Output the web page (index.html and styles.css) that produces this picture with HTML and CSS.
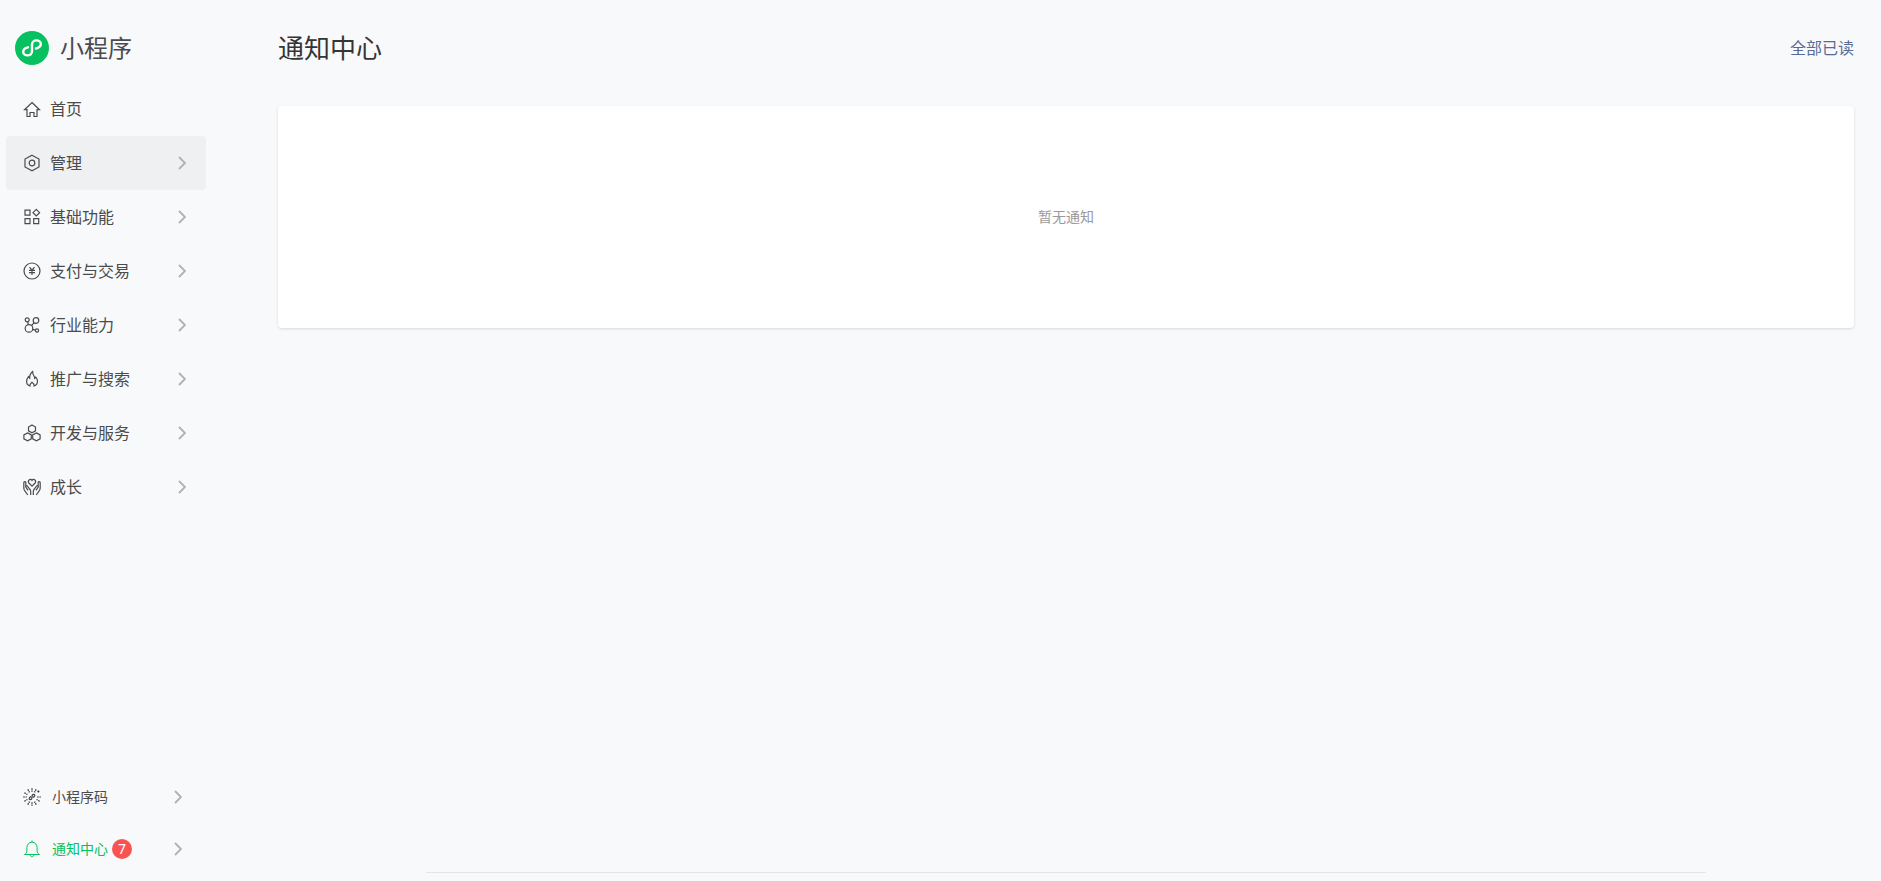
FILE: index.html
```html
<!DOCTYPE html>
<html lang="zh-CN">
<head>
<meta charset="utf-8">
<meta name="viewport" content="width=device-width, initial-scale=1">
<title>通知中心</title>
<link rel="stylesheet" href="styles.css">
</head>
<body>
<svg class="defs" width="0" height="0" aria-hidden="true">
  <symbol id="chevron" viewBox="0 0 8 14"><path d="M1 1l6 6-6 6"/></symbol>
</svg>
<div class="app">
  <aside class="sidebar">
    <a class="brand" href="#">
      <svg class="brand-logo" viewBox="0 0 34 34" aria-hidden="true">
        <circle cx="17" cy="17" r="17" fill="#07c160"/>
        <path d="M13 16.300c-2.900.7-4.800 2.300-4.800 4.400 0 2.200 1.900 3.700 4.300 3.700 2.600 0 4.500-1.700 4.500-4.100V13.500c0-2.400 1.900-4.100 4.500-4.100 2.400 0 4.300 1.500 4.300 3.700 0 2.100-1.900 3.700-4.800 4.400" fill="none" stroke="#fff" stroke-width="2.400" stroke-linecap="round"/>
      </svg>
      <span class="brand-name">小程序</span>
    </a>
    <nav class="menu">
      <a class="item" href="#">
        <svg class="icon" viewBox="0 0 18 18"><path d="M9 2.500L16.500 9.700H14v6.800h-3v-4H7v4H4V9.700H1.500z"/></svg>
        <span class="label">首页</span>
      </a>
      <a class="item active" href="#">
        <svg class="icon" viewBox="0 0 18 18"><path d="M9 1.200l7 3.900v7.800l-7 3.900-7-3.900V5.100z"/><circle cx="9" cy="9" r="2.800"/></svg>
        <span class="label">管理</span><svg class="chevron"><use href="#chevron"/></svg>
      </a>
      <a class="item" href="#">
        <svg class="icon" viewBox="0 0 18 18"><path d="M2 2.200h5v5H2zM2 10.700h5v5H2zM10.700 10.700h5v5h-5zM13.300 1.400l3.300 3.300-3.300 3.300L10 4.700z"/></svg>
        <span class="label">基础功能</span><svg class="chevron"><use href="#chevron"/></svg>
      </a>
      <a class="item" href="#">
        <svg class="icon" viewBox="0 0 18 18"><circle cx="9" cy="9" r="8"/><path d="M6.500 5.200L9 8.200l2.500-3M9 8.200v4.800M6 8.400h6M6 10.700h6"/></svg>
        <span class="label">支付与交易</span><svg class="chevron"><use href="#chevron"/></svg>
      </a>
      <a class="item" href="#">
        <svg class="icon" viewBox="0 0 18 18"><circle cx="4.200" cy="3.800" r="2"/><circle cx="13" cy="4.500" r="2.800"/><circle cx="6" cy="12.400" r="3.800"/><circle cx="14" cy="14.500" r="1.600"/><path d="M4.700 5.800l.6 2.800M11.200 6.700L8.600 9.500M9.600 13.300l2.800.8"/></svg>
        <span class="label">行业能力</span><svg class="chevron"><use href="#chevron"/></svg>
      </a>
      <a class="item" href="#">
        <svg class="icon" viewBox="0 0 18 18"><path d="M7 15.900C4.600 15.300 3.600 13.300 3.600 11.300c0-2.100.9-3.500 1.900-4.700.4.900.7 1.300 1.200 1.700C6.600 5.800 7.500 3.200 9.600 1.600c0 2.300.6 3.500 1.600 4.900.4.600.5 1.200.5 1.900.6-.4.900-.8 1.100-1.300 1.200 1.400 1.700 2.700 1.700 4.200 0 2.200-1.200 3.900-3.400 4.600.3-1.600-.4-2.500-2.100-3.700-1.600 1.200-2.300 2.100-2 3.700z"/></svg>
        <span class="label">推广与搜索</span><svg class="chevron"><use href="#chevron"/></svg>
      </a>
      <a class="item" href="#">
        <svg class="icon" viewBox="0 0 18 18"><path d="M9 1l3.500 2v3.800L9 8.700 5.500 6.800V3zM4.600 8.900l3.700 2v3.900l-3.700 2-3.700-2v-3.900zM13.400 8.900l3.700 2v3.900l-3.700 2-3.700-2v-3.900z"/></svg>
        <span class="label">开发与服务</span><svg class="chevron"><use href="#chevron"/></svg>
      </a>
      <a class="item" href="#">
        <svg class="icon" viewBox="0 0 18 18"><path d="M9 8.100L5.900 5C4.100 2.800 7.200-.1 9 2.400c1.800-2.500 4.900.4 3.100 2.600zM7.700 17v-3.200c0-1.200-.3-2-1-2.800L4.300 8c-.8-.9-2.100 0-1.500 1.100l2.300 3.300M10.300 17v-3.200c0-1.200.3-2 1-2.800L13.700 8c.8-.9 2.100 0 1.500 1.100l-2.300 3.300M2.800 8.800V4.500C2.500 3.300.8 3.500.8 4.700V10c0 1.300.4 2.200 1.200 3.200L4.800 17M15.200 8.800V4.500c.3-1.200 2-1 2 .2V10c0 1.300-.4 2.200-1.200 3.200L13.200 17"/></svg>
        <span class="label">成长</span><svg class="chevron"><use href="#chevron"/></svg>
      </a>
    </nav>
    <div class="tools">
      <a class="item small" href="#">
        <svg class="icon code" viewBox="0 0 18 18">
          <path d="M9 .2v3.600M9 14.200v3.600M.2 9h3.600M14.200 9h3.600M4.800 1.400l1.700 3M13.200 16.600l-1.700-3M13.200 1.400l-1.700 3M4.800 16.600l1.700-3M1.400 4.800l3 1.700M16.600 13.200l-3-1.700M1.400 13.200l3-1.700" stroke-dasharray="1.500 .8"/>
          <path class="mark" d="M8.100 8.600c-2.200.4-2.600 3.100-.8 3.100C9 11.700 9 10.300 9 9s0-2.700 1.700-2.700c1.800 0 1.400 2.700-.8 3.100"/>
          <circle class="dot" cx="15.400" cy="3.400" r="1"/>
        </svg>
        <span class="label">小程序码</span><svg class="chevron"><use href="#chevron"/></svg>
      </a>
      <a class="item small current" href="#">
        <svg class="icon fine" viewBox="0 0 18 18"><path d="M9 .6v1.600M1.500 14.500h15c-1.700-1.100-2.400-2-2.400-3.500V7.500C14.100 4.400 12 2.200 9 2.200S3.900 4.400 3.900 7.500V11c0 1.500-.7 2.400-2.400 3.500zM7 14.700c.3 2.700 3.700 2.700 4 0"/></svg>
        <span class="label">通知中心</span><span class="badge">7</span><svg class="chevron"><use href="#chevron"/></svg>
      </a>
    </div>
  </aside>
  <main class="main">
    <header class="header">
      <h1>通知中心</h1>
      <button class="read-all" type="button">全部已读</button>
    </header>
    <section class="card"><p>暂无通知</p></section>
    <footer class="footer"></footer>
  </main>
</div>
</body>
</html>
```
FILE: styles.css
```css
* { box-sizing: border-box; }
body {
  margin: 0;
  background: #f8f9fb;
  color: #353535;
  font-family: "Noto Sans CJK SC", sans-serif;
  font-weight: 400;
}
a { color: inherit; text-decoration: none; }
.defs { display: none; }
.app { display: flex; min-height: 100vh; }

.sidebar {
  display: flex;
  flex-direction: column;
  flex: none;
  width: 212px;
  padding: 31px 6px 6px;
}
.brand {
  display: flex;
  align-items: center;
  gap: 11px;
  height: 34px;
  margin: 0 0 17px 9px;
}
.brand-logo { width: 34px; height: 34px; }
.brand-name { padding-bottom: 2px; font-size: 24px; line-height: 32px; color: #4a4b4d; }

.item {
  display: flex;
  align-items: center;
  height: 54px;
  padding: 0 20px 0 17px;
  border-radius: 4px;
  font-size: 16px;
  color: #4a4b4d;
}
.item.active { background: #eff0f2; }
.label { padding-bottom: 2px; }
.icon {
  flex: none;
  width: 18px;
  height: 18px;
  margin-right: 9px;
  fill: none;
  stroke: #4a4b4d;
  stroke-width: 1.2;
  overflow: visible;
}
.icon.fine { stroke-width: 1; }
.chevron {
  flex: none;
  width: 8px;
  height: 14px;
  margin-left: auto;
  fill: none;
  stroke: #b0b1b3;
  stroke-width: 1.8;
}
.tools { margin-top: auto; }
.item.small { height: 52px; padding-right: 24px; font-size: 14px; }
.small .icon { margin-right: 11px; }
.icon.code { stroke: #222; stroke-width: 1.2; }
.code .mark { stroke: #444; }
.code .dot { fill: #222; stroke: none; }
.item.current { color: #07c160; }
.current .icon { stroke: #07c160; }
.badge {
  width: 20px;
  height: 20px;
  margin-left: 4px;
  border-radius: 50%;
  background: #fa5151;
  color: #fff;
  font: 14px/20px "Noto Sans", sans-serif;
  text-align: center;
}

.main {
  display: flex;
  flex-direction: column;
  flex: 1;
  min-width: 0;
  padding: 28px 27px 8px 66px;
}
.header {
  display: flex;
  align-items: center;
  justify-content: space-between;
  height: 40px;
  margin-bottom: 38px;
}
h1 { margin: 0; padding-bottom: 2px; font-size: 26px; line-height: 38px; font-weight: 400; }
.read-all {
  padding: 0 0 2px;
  border: 0;
  background: none;
  color: #576b95;
  font: inherit;
  font-size: 16px;
  cursor: pointer;
}
.card {
  padding: 99px 32px 101px;
  border-radius: 4px;
  background: #fff;
  box-shadow: 0 1px 3px rgba(0, 0, 0, 0.13);
  text-align: center;
}
.card p { margin: 0; font-size: 14px; line-height: 22px; color: #9a9a9a; }
.footer {
  width: 100%;
  max-width: 1280px;
  margin: auto auto 0;
  border-top: 1px solid #e4e5e7;
}
```
